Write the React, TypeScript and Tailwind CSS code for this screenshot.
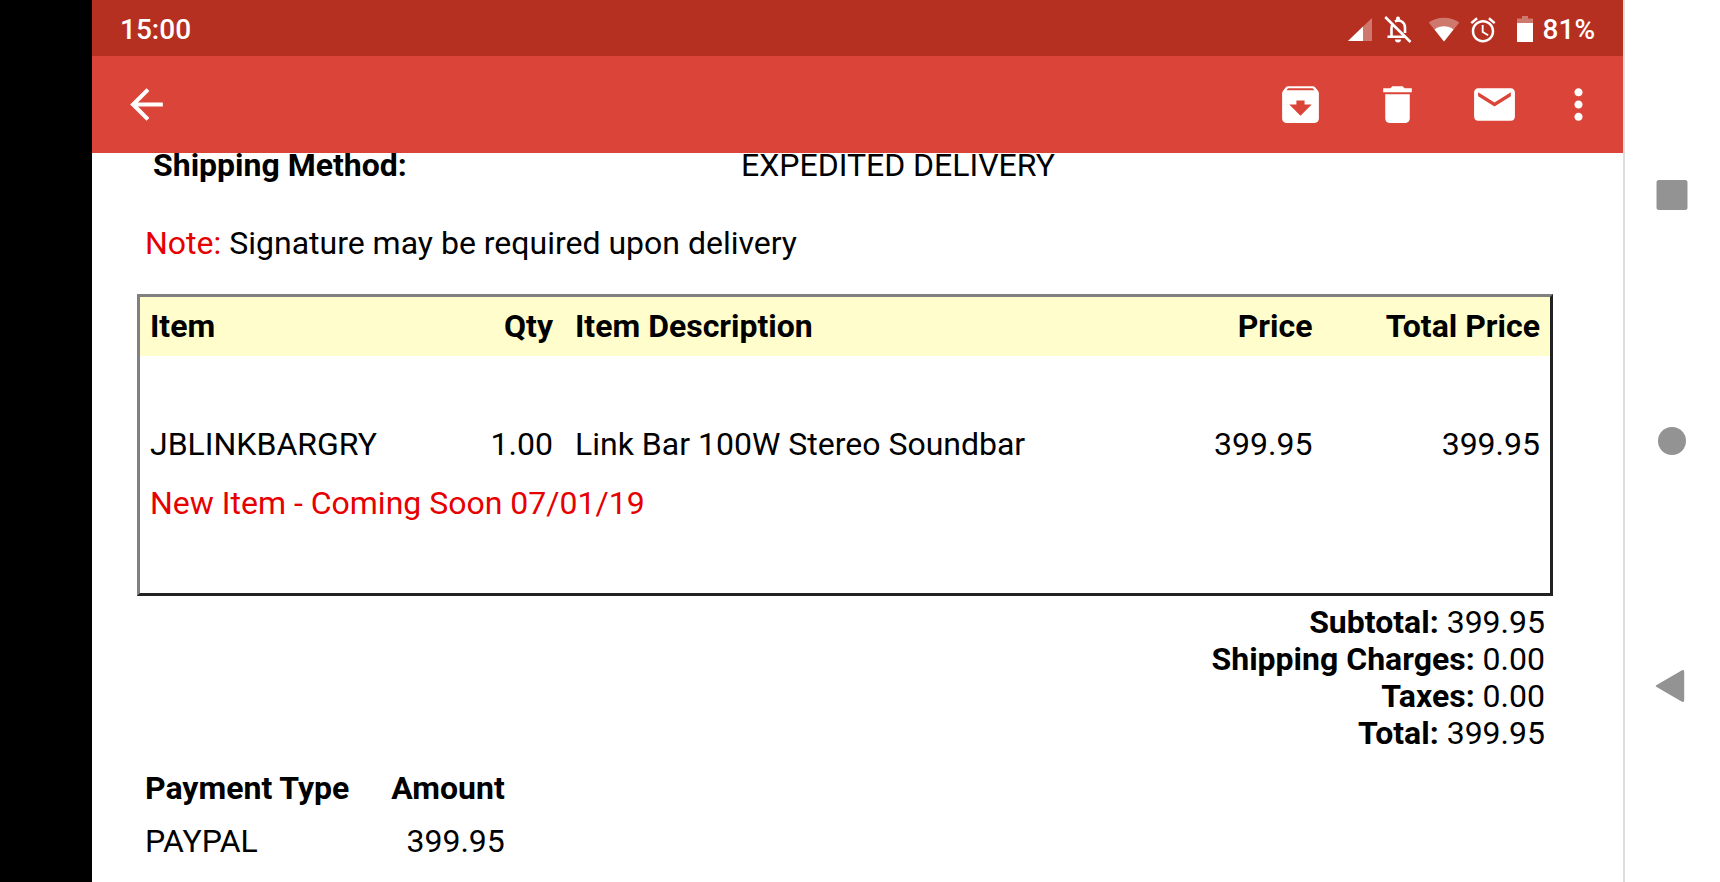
import React from 'react';

interface IconButtonProps {
	label: string;
	path: string;
}

interface TotalLine {
	label: string;
	value: string;
}

const BACK = 'M20 11H7.83l5.59-5.59L12 4l-8 8 8 8 1.41-1.41L7.83 13H20v-2z';
const ARCHIVE =
	'M20.54 5.23l-1.39-1.68C18.88 3.21 18.47 3 18 3H6c-.47 0-.88.21-1.16.55L3.46 5.23C3.17 5.57 3 6.02 3 6.5V19c0 1.1.9 2 2 2h14c1.1 0 2-.9 2-2V6.5c0-.48-.17-.93-.46-1.27zM12 17.5L6.5 12H10v-2h4v2h3.5L12 17.5zM5.12 5l.81-1h12l.94 1H5.12z';
const TRASH = 'M6 19c0 1.1.9 2 2 2h8c1.1 0 2-.9 2-2V7H6v12zM19 4h-3.5l-1-1h-5l-1 1H5v2h14V4z';
const MAIL =
	'M20 4H4c-1.1 0-1.99.9-1.99 2L2 18c0 1.1.9 2 2 2h16c1.1 0 2-.9 2-2V6c0-1.1-.9-2-2-2zm0 4l-8 5-8-5V6l8 5 8-5v2z';
const MORE =
	'M12 8c1.1 0 2-.9 2-2s-.9-2-2-2-2 .9-2 2 .9 2 2 2zm0 2c-1.1 0-2 .9-2 2s.9 2 2 2 2-.9 2-2-.9-2-2-2zm0 6c-1.1 0-2 .9-2 2s.9 2 2 2 2-.9 2-2-.9-2-2-2z';

const totals: TotalLine[] = [
	{ label: 'Subtotal:', value: '399.95' },
	{ label: 'Shipping Charges:', value: '0.00' },
	{ label: 'Taxes:', value: '0.00' },
	{ label: 'Total:', value: '399.95' },
];

const IconButton: React.FC<IconButtonProps> = ({ label, path }) => (
	<button type="button" aria-label={label} className="shrink-0">
		<svg viewBox="0 0 24 24" className="block size-[49px]" fill="currentColor">
			<path d={path} />
		</svg>
	</button>
);

const StatusBar: React.FC = () => (
	<div className="flex h-14 items-center justify-between bg-[#b63021] px-7 pt-1 text-[28px] leading-8 font-medium text-white">
		<span>15:00</span>
		<div className="flex items-center">
			{/* Signal */}
			<svg viewBox="0 0 24 28" className="mr-3 h-7 w-6" fill="currentColor">
				<path d="M24 2v23H0z" opacity=".35" />
				<path d="M15 10.600V25H0z" />
			</svg>
			{/* Notifications off */}
			<svg viewBox="0 0 28 28" className="mr-4 size-7" fill="none" stroke="currentColor" strokeWidth="2.6">
				<path d="M7.500 20.700V12c0-1.500.5-3 1.300-4M3.500 20.700h18M11 5.500c4.500-2.500 10 .5 10 6V17" />
				<path d="M14 4V2.500" strokeWidth="4" strokeLinecap="round" />
				<path d="M1.200 1l25.300 25" />
				<path d="M11 23.500h6a3 3 0 0 1-6 0z" fill="currentColor" stroke="none" />
			</svg>
			{/* Wifi */}
			<svg viewBox="0 0 32 28" className="mr-2 h-7 w-8" fill="currentColor">
				<path d="M.7 6.500C9 0 23 0 31.300 6.500L16 25.500z" opacity=".35" />
				<path d="M6.500 13.500c5.500-4.400 13.500-4.400 19 0L16 25.500z" />
			</svg>
			{/* Alarm */}
			<svg viewBox="0 0 24 24" className="mr-[15px] size-[30px]" fill="currentColor">
				<path d="M22 5.720l-4.600-3.860-1.290 1.530 4.600 3.860L22 5.720zM7.880 3.390L6.600 1.860 2 5.710l1.290 1.530 4.590-3.850zM12.500 8H11v6l4.750 2.850.75-1.230-4-2.370V8zM12 4c-4.970 0-9 4.030-9 9s4.020 9 9 9c4.970 0 9-4.030 9-9s-4.030-9-9-9zm0 16c-3.870 0-7-3.130-7-7s3.130-7 7-7 7 3.130 7 7-3.130 7-7 7z" />
			</svg>
			{/* Battery */}
			<svg viewBox="0 0 24 28" className="mr-1.5 h-7 w-6" fill="currentColor">
				<path d="M9 0h6v2.500h5V7H4V2.500h5z" opacity=".35" />
				<path d="M4 7h16v18.500a.5.5 0 0 1-.5.5h-15a.5.5 0 0 1-.5-.5z" />
			</svg>
			<span>81%</span>
		</div>
	</div>
);

const Toolbar: React.FC = () => (
	<header className="flex h-[97px] items-center justify-between bg-[#db4438] pl-[30px] pr-5 text-white">
		<IconButton label="Back" path={BACK} />
		<div className="flex items-center gap-[35px]">
			<div className="flex items-center gap-12">
				<IconButton label="Archive" path={ARCHIVE} />
				<IconButton label="Delete" path={TRASH} />
				<IconButton label="Mark unread" path={MAIL} />
			</div>
			<IconButton label="More options" path={MORE} />
		</div>
	</header>
);

const OrderTable: React.FC = () => (
	<div className="mt-8 border-[3px] border-t-[#808080] border-l-[#808080] border-r-[#222] border-b-[#222]">
		<table className="w-full table-fixed">
			<colgroup>
				<col className="w-[17%]" />
				<col className="w-[13%]" />
				<col className="w-[37%]" />
				<col />
				<col className="w-[16%]" />
			</colgroup>
			<thead>
				<tr className="h-[59px] bg-[#fffdcb]">
					<th className="px-2.5 text-left">Item</th>
					<th className="px-2.5 text-right">Qty</th>
					<th className="px-3 text-left">Item Description</th>
					<th className="px-3 text-right">Price</th>
					<th className="px-2.5 text-right">Total Price</th>
				</tr>
			</thead>
			<tbody>
				<tr className="h-[59px]">
					<td colSpan={5} />
				</tr>
				<tr className="h-[59px]">
					<td className="px-2.5">JBLINKBARGRY</td>
					<td className="px-2.5 text-right">1.00</td>
					<td className="px-3">Link Bar 100W Stereo Soundbar</td>
					<td className="px-3 text-right">399.95</td>
					<td className="px-2.5 text-right">399.95</td>
				</tr>
				<tr className="h-[59px]">
					<td colSpan={5} className="px-2.5 text-[#e60000]">
						New Item - Coming Soon 07/01/19
					</td>
				</tr>
				<tr className="h-[60px]">
					<td colSpan={5} />
				</tr>
			</tbody>
		</table>
	</div>
);

const NavRail: React.FC = () => (
	<nav className="flex w-[97px] shrink-0 flex-col items-center justify-between border-l-2 border-[#ddd] bg-white py-[178px] pr-0.5 text-[#939393]">
		<button type="button" aria-label="Recent apps">
			<svg viewBox="0 0 34 34" className="block size-[34px]" fill="currentColor">
				<rect x="1.500" y="2" width="31" height="30" rx="2.500" />
			</svg>
		</button>
		<button type="button" aria-label="Home">
			<svg viewBox="0 0 34 34" className="block size-[34px]" fill="currentColor">
				<circle cx="17" cy="17" r="14" />
			</svg>
		</button>
		<button type="button" aria-label="Go back">
			<svg viewBox="0 0 34 34" className="block size-[34px]" fill="currentColor">
				<path d="M1.200 15.200L27 .2q2.200-.8 2.200 1.500v28.600q0 2.300-2.200 1.500L1.200 16.800q-1-.8 0-1.600z" />
			</svg>
		</button>
	</nav>
);

const App: React.FC = () => {
	return (
		<div className="flex h-screen overflow-hidden bg-black font-['Roboto',sans-serif]">
			<div className="ml-[92px] flex min-w-0 flex-1 flex-col bg-white">
				<StatusBar />
				<Toolbar />

				<main className="min-h-0 flex-1 overflow-hidden pl-[45px] pr-[70px] text-[32px] leading-[37px] text-black">
					{/* Sits tight against the toolbar */}
					<div className="flex pl-4 leading-6">
						<div className="w-[42%] font-bold">Shipping Method:</div>
						<div>EXPEDITED DELIVERY</div>
					</div>

					<p className="mt-12 pl-2">
						<span className="text-[#e60000]">Note:</span> Signature may be required upon delivery
					</p>

					<OrderTable />

					<div className="mt-2 pr-2 text-right">
						{totals.map((line) => (
							<p key={line.label}>
								<b>{line.label}</b> {line.value}
							</p>
						))}
					</div>

					<table className="mt-2.5 ml-2">
						<thead>
							<tr className="h-[53px]">
								<th className="pr-[42px] text-left">Payment Type</th>
								<th className="text-right">Amount</th>
							</tr>
						</thead>
						<tbody>
							<tr className="h-[53px]">
								<td>PAYPAL</td>
								<td className="text-right">399.95</td>
							</tr>
						</tbody>
					</table>
				</main>
			</div>

			<NavRail />
		</div>
	);
};

export default App;
